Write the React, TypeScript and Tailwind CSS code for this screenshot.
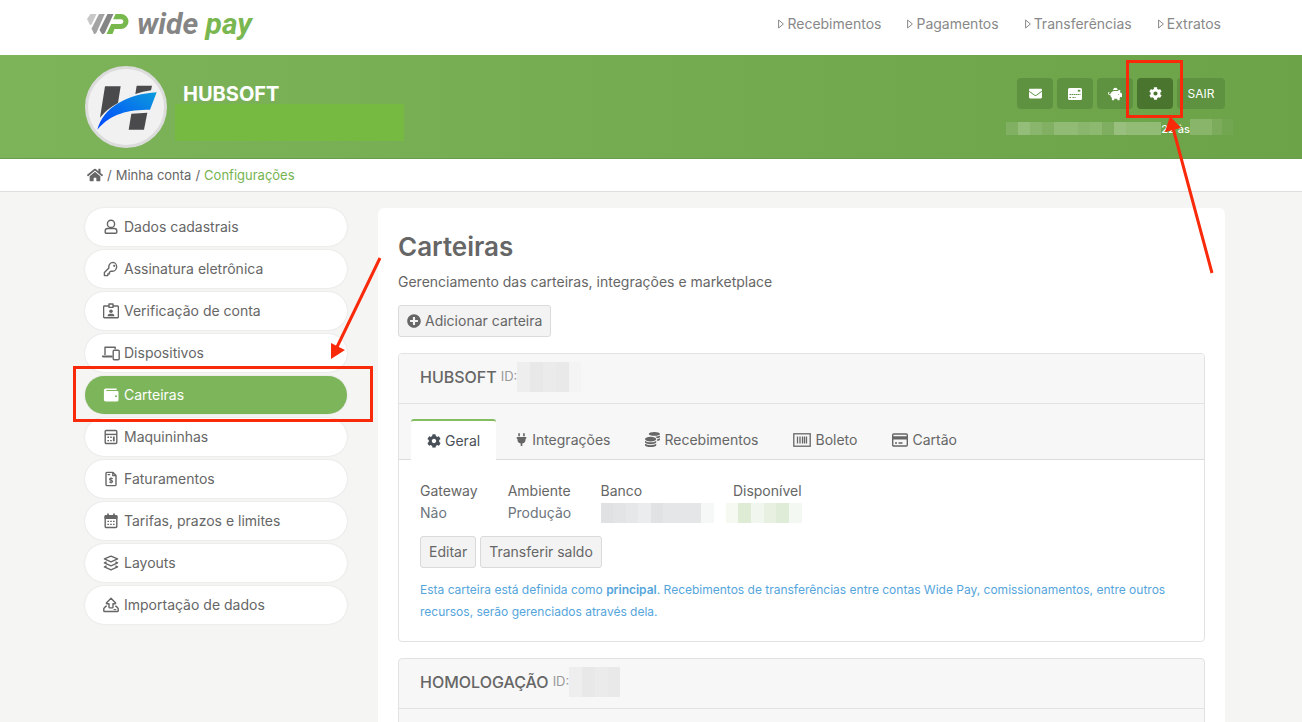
import React from "react";
import { FaCog, FaCoins, FaEnvelope, FaHome, FaPiggyBank, FaPlug, FaPlusCircle } from "react-icons/fa";

interface IconProps {
  className?: string;
  children?: React.ReactNode;
}

interface SideItem {
  label: string;
  icon: React.ReactNode;
  active?: boolean;
}

interface BlurProps {
  cells: string[];
  className: string;
}

const Icon: React.FC<IconProps> = ({ className = "w-4 h-4", children }) => (
  <svg viewBox="0 0 16 16" className={`${className} shrink-0`} fill="none" stroke="currentColor" strokeWidth="1.4" strokeLinejoin="round" aria-hidden="true">
    {children}
  </svg>
);

const sideItems: SideItem[] = [
  {
    label: "Dados cadastrais",
    icon: (
      <Icon>
        <circle cx="8" cy="4.9" r="3.6" />
        <path d="M4.6 9.5h6.8a2.4 2.4 0 0 1 2.4 2.4v1.3a1 1 0 0 1-1 1H3.2a1 1 0 0 1-1-1v-1.3a2.4 2.4 0 0 1 2.4-2.4z" />
      </Icon>
    ),
  },
  {
    label: "Assinatura eletrônica",
    icon: (
      <Icon>
        <path d="M10.2 1.4a4.4 4.4 0 0 0-4.3 5.5L1.4 11.4v3.2h3.4v-1.7h1.6v-1.6l1.7-1.2a4.4 4.4 0 1 0 2.1-8.7z" />
        <circle cx="11.2" cy="4.8" r="1.1" fill="currentColor" stroke="none" />
      </Icon>
    ),
  },
  {
    label: "Verificação de conta",
    icon: (
      <Icon>
        <path d="M6 3H1.4a.8.8 0 0 0-.8.8v10.1a.8.8 0 0 0 .8.8h13.2a.8.8 0 0 0 .8-.8V3.8a.8.8 0 0 0-.8-.8H10" />
        <path d="M6 1h4v3.4H6z" />
        <circle cx="8" cy="8.2" r="1.8" fill="currentColor" stroke="none" />
        <path d="M4.6 13.2c0-1.6.8-2.5 2-2.5h2.8c1.2 0 2 .9 2 2.5z" fill="currentColor" stroke="none" />
      </Icon>
    ),
  },
  {
    label: "Dispositivos",
    icon: (
      <Icon className="w-[18px] h-4">
        <path d="M2 10V2.2h10.2v2" />
        <path d="M-.4 11.4h9.2v.3H.8z" strokeWidth="1.8" />
        <rect x="10.2" y="5.2" width="6" height="9.6" rx="1" />
      </Icon>
    ),
  },
  {
    label: "Carteiras",
    active: true,
    icon: (
      <Icon>
        <path
          d="M2.6 1.6h11v1.5H3.3v.9h10.9a1.3 1.3 0 0 1 1.3 1.3v7.8a1.3 1.3 0 0 1-1.3 1.3H2.6a1.7 1.7 0 0 1-1.7-1.7V3.3a1.7 1.7 0 0 1 1.7-1.7zM13 8.3a1 1 0 1 0 0 2 1 1 0 0 0 0-2z"
          fill="currentColor"
          fillRule="evenodd"
          stroke="none"
        />
      </Icon>
    ),
  },
  {
    label: "Maquininhas",
    icon: (
      <Icon>
        <rect x="2.2" y="1.5" width="11.6" height="13" rx="1" />
        <path d="M2.2 5.4h11.6" />
        <path d="M4.4 8.2h1.6M7.2 8.2h1.6M4.4 11.6h1.6M7.2 11.6h1.6" />
        <path d="M10.8 7.5v4.8" strokeWidth="1.8" />
      </Icon>
    ),
  },
  {
    label: "Faturamentos",
    icon: (
      <Icon>
        <path d="M3 2.2a.8.8 0 0 1 .8-.8H10l3 3v9.4a.8.8 0 0 1-.8.8H3.8a.8.8 0 0 1-.8-.8z" />
        <path d="M9.8 1.4v3.2H13M4.6 3.6h2.6" />
        <path d="M9.8 7.7c-.8-.6-3.3-.7-3.3.6 0 1.4 3.2.7 3.2 2.2 0 1.3-2.6 1.2-3.4.4M8 6.2v6.4" strokeWidth="1.1" />
      </Icon>
    ),
  },
  {
    label: "Tarifas, prazos e limites",
    icon: (
      <Icon>
        <rect x="2.2" y="2.8" width="11.6" height="11.7" rx="1" />
        <path d="M2.2 3h11.6v2.2H2.2z" fill="currentColor" />
        <path d="M5 .6v3M11 .6v3" strokeWidth="1.7" />
        <path d="M4.4 8.4h1.6M7.2 8.4h1.6M10 8.4h1.6M4.4 11.4h1.6M7.2 11.4h1.6M10 11.4h1.6" />
      </Icon>
    ),
  },
  {
    label: "Layouts",
    icon: (
      <Icon>
        <path d="M8 1.2l6.6 2.7L8 6.8 1.4 3.9z" />
        <path d="M3.6 6.8L1.4 7.9 8 10.8l6.6-2.9-2.2-1.1" />
        <path d="M3.6 10.8l-2.2 1.1L8 14.8l6.6-2.9-2.2-1.1" />
      </Icon>
    ),
  },
  {
    label: "Importação de dados",
    icon: (
      <Icon>
        <path d="M8 1.2L3.6 5.7c-.4.5-.2 1 .4 1h2v3.6c0 .4.2.6.6.6h2.8c.4 0 .6-.2.6-.6V6.7h2c.6 0 .8-.5.4-1z" />
        <path d="M3.8 9.2h-1l-2 2.3v2.2c0 .5.3.8.8.8h12.8c.5 0 .8-.3.8-.8v-2.2l-2-2.3h-1" />
        <path d="M10.6 12.6h2.6" strokeWidth="1.1" />
      </Icon>
    ),
  },
];

const tabs = [
  { label: "Geral", icon: <FaCog size={14} />, active: true },
  { label: "Integrações", icon: <FaPlug size={13} /> },
  { label: "Recebimentos", icon: <FaCoins size={15} /> },
  {
    label: "Boleto",
    icon: (
      <svg viewBox="0 0 18 14" className="w-[18px] h-[14px]" fill="none" stroke="currentColor" aria-hidden="true">
        <rect x=".8" y=".8" width="16.4" height="12.4" strokeWidth="1.3" />
        <path d="M4.5 3.5v7M7 3.5v7M9.5 3.5v7M11.5 3.5v7M13.5 3.5v7" strokeWidth="1.3" />
      </svg>
    ),
  },
  {
    label: "Cartão",
    icon: (
      <svg viewBox="0 0 16 14" className="w-4 h-[14px]" fill="none" stroke="currentColor" aria-hidden="true">
        <rect x=".7" y="1" width="14.6" height="12" rx="1" strokeWidth="1.4" />
        <path d="M1 4.8h14" strokeWidth="3.2" />
        <path d="M3 10h2M6.500 10h4" strokeWidth="1.4" />
      </svg>
    ),
  },
];

const menu = ["Recebimentos", "Pagamentos", "Transferências", "Extratos"];

const Blur: React.FC<BlurProps> = ({ cells, className }) => (
  <div className={`flex shrink-0 ${className}`}>
    {cells.map((c, i) => (
      <span key={i} className="flex-1" style={{ backgroundColor: c }} />
    ))}
  </div>
);

const BrandLogo = () => (
  <a href="#" className="flex items-center gap-2 pl-[2px]" aria-label="wide pay">
    <svg viewBox="0 0 42 20" className="w-[42px] h-5" aria-hidden="true">
      <path d="M3.500 0h6L4.600 10.500 3 11 0 5z" fill="#c8c8c8" />
      <path d="M12 0h5.800L9.500 18.500 8 20H7L4.600 14.500z" fill="#a3a3a3" />
      <path d="M20.500 0h6L18 18.500 16.500 20h-1.500L12.500 16z" fill="#858585" />
      <path d="M28.500 0H34a7.500 7.500 0 0 1 0 15h-6.500L25.500 20H19.500l4.800-10H34a2.300 2.300 0 0 0 0-4.800h-7.800z" fill="#78b94d" />
    </svg>
    <span className="font-['Roboto',sans-serif] text-[30px] leading-8 font-bold italic text-[#858585]">
      wide <span className="text-[#7ab751]">pay</span>
    </span>
  </a>
);

const Avatar = () => (
  <div className="w-[82px] h-[82px] rounded-full bg-[#f1f1f1] border-3 border-[#dcdcdc] shrink-0">
    <svg viewBox="9 9 228 228" className="w-full h-full" aria-hidden="true">
      <defs>
        <linearGradient id="swoosh" x1="0" y1="1" x2="1" y2="0">
          <stop offset="0" stopColor="#0046ff" />
          <stop offset="1" stopColor="#0d9bdc" />
        </linearGradient>
      </defs>
      <path d="M60 61h47l-8 50q-34 18-54 44z" fill="#4a4a4c" />
      <path d="M155 59h46l-3 14q-24 3-47 11z" fill="#4a4a4c" />
      <path d="M139 143l48-3-10 51h-46z" fill="#4a4a4c" />
      <path d="M37 191C56 122 130 84 215 79l-20 52C130 131 78 142 37 191z" fill="url(#swoosh)" />
    </svg>
  </div>
);

const userButton = "w-9 h-[31px] rounded bg-[#5e9241] flex items-center justify-center";
const grayButton = "h-8 px-2 rounded-[3px] border border-[#dadada] bg-[#f3f3f3] flex items-center gap-1";

const CardHead: React.FC<{ name: string; cells: string[] }> = ({ name, cells }) => (
  <div className="flex items-center h-[50px] px-[21px] pb-1 border-b border-[#e2e2e2]">
    <h2 className="text-base font-medium">{name}</h2>
    <span className="ml-1 text-[13px] text-[#999]">ID:</span>
    <Blur cells={cells} className="w-16 h-[30px]" />
  </div>
);

export default function App() {
  return (
    <div className="relative h-screen bg-[#f5f5f4] font-['Inter',sans-serif] text-sm text-[#666] overflow-hidden">
      <header className="bg-white pl-2">
        <div className="max-w-[1140px] mx-auto h-[55px] pb-2 flex items-center justify-between">
          <BrandLogo />
          <nav className="flex gap-[26px] pr-1 text-[#888]">
            {menu.map((m) => (
              <a href="#" key={m} className="flex items-center gap-[3px]">
                <svg viewBox="0 0 6 10" className="w-[6px] h-[10px]" fill="none" stroke="currentColor" aria-hidden="true">
                  <path d="M.6 1v8L5.4 5z" />
                </svg>
                {m}
              </a>
            ))}
          </nav>
        </div>
      </header>

      <section className="bg-linear-to-r from-[#7db45a] to-[#6ca349] border-b border-[#6a9d4b] pl-2">
        <div className="max-w-[1140px] mx-auto h-[103px] flex items-start justify-between">
          <div className="flex pt-[11px] gap-2">
            <Avatar />
            <div className="pt-4">
              <h2 className="pl-2 h-[22px] leading-6 text-xl font-bold text-white">HUBSOFT</h2>
              <div className="w-[229px] h-[37px] bg-[#76ba42]" />
            </div>
          </div>
          <div className="pt-[23px] text-white">
            <div className="flex justify-end gap-1">
              <button className={userButton} aria-label="Mensagens"><FaEnvelope size={13} /></button>
              <button className={userButton} aria-label="Cartão">
                <svg viewBox="0 0 14 12" className="w-[14px] h-3" aria-hidden="true">
                  <rect width="14" height="12" rx="1.5" fill="currentColor" />
                  <path d="M1.500 6.500h11M1.500 9.500h1.500M4.500 9.500h3" stroke="#5e9241" strokeWidth="1.2" strokeDasharray="1.5 .5" />
                  <rect x="9.8" y="1.8" width="2.5" height="1.8" fill="#5e9241" />
                </svg>
              </button>
              <button className={userButton} aria-label="Cofrinho"><FaPiggyBank size={14} /></button>
              <button className="w-9 h-[31px] rounded bg-[#4a752e] flex items-center justify-center" aria-label="Configurações"><FaCog size={13} /></button>
              <button className="w-12 h-[31px] rounded bg-[#5e9241] text-xs">SAIR</button>
            </div>
            <div className="flex items-end h-4 mt-[10px] -mr-2 text-[11px] leading-3 font-medium">
              <Blur
                cells={["#82b062", "#94bd79", "#89b66c", "#82b062", "#91bb75", "#91bb75", "#89b66c", "#8cb870", "#80ae60", "#98bf7d", "#92bb76", "#92bb76", "#92bb76"]}
                className="w-[155px] h-[13px]"
              />
              22 às
              <Blur cells={["#89b56b", "#89b56b", "#7cac5b", "#72a650"]} className="w-[43px] h-4" />
            </div>
          </div>
        </div>
      </section>

      <div className="bg-white border-b border-[#dedede] pl-2">
        <nav className="max-w-[1140px] mx-auto h-8 px-[2px] flex items-center gap-1 text-[13px]">
          <a href="#" aria-label="Início"><FaHome size={16} /></a>/<a href="#">Minha conta</a>/
          <a href="#" className="text-[#76b34f]">Configurações</a>
        </nav>
      </div>

      <div className="pl-2">
        <main className="max-w-[1140px] mx-auto pt-4 flex items-start gap-[31px]">
          <nav className="w-[262px] shrink-0 flex flex-col gap-1">
            {sideItems.map((item) => (
              <a
                href="#"
                key={item.label}
                className={`h-[38px] pl-4 rounded-full flex items-center gap-1 shadow-[0_0_2px_rgba(0,0,0,0.12)] ${
                  item.active ? "bg-[#7cb55a] text-white" : "bg-white"
                }`}
              >
                <span className="w-[19px] flex justify-center">{item.icon}</span>
                {item.label}
              </a>
            ))}
          </nav>

          <section className="flex-1 bg-white rounded-md px-5 pt-[21px] pb-5">
            <h1 className="text-[26px] leading-9 font-semibold">Carteiras</h1>
            <p className="mt-[7px] leading-5">Gerenciamento das carteiras, integrações e marketplace</p>
            <button className={`${grayButton} mt-[13px]`}>
              <FaPlusCircle size={14} /> Adicionar carteira
            </button>

            <article className="mt-4 rounded border border-[#e2e2e2] overflow-hidden">
              <div className="bg-[#f7f7f7]">
                <CardHead name="HUBSOFT" cells={["#eee", "#e8e8e8", "#ebebeb", "#e9e9e9", "#f4f4f4"]} />
                <div className="flex items-end gap-[3px] h-14 px-3 border-b border-[#dcdcdc]">
                  {tabs.map((t) => (
                    <button
                      key={t.label}
                      className={`h-[41px] px-4 flex items-center gap-1 border-t-2 ${
                        t.active ? "-mb-px rounded-t-[3px] border-[#83bd5f] bg-white text-[#495057]" : "border-transparent"
                      }`}
                    >
                      {t.icon}
                      {t.label}
                    </button>
                  ))}
                </div>
              </div>

              <div className="px-[21px] pt-5 pb-[18px]">
                <table className="text-left leading-[22px]">
                  <thead>
                    <tr>
                      <th className="font-normal pr-[30px]">Gateway</th>
                      <th className="font-normal pr-[30px]">Ambiente</th>
                      <th className="font-normal pr-3">Banco</th>
                      <th className="font-normal text-right">Disponível</th>
                    </tr>
                  </thead>
                  <tbody className="text-[#6c757d]">
                    <tr>
                      <td>Não</td>
                      <td>Produção</td>
                      <td className="pr-3">
                        <Blur cells={["#e0e1e3", "#e3e4e6", "#e6e7e8", "#ebeced", "#e1e2e4", "#e5e6e7", "#e5e6e7", "#e5e6e7", "#f6f7f7"]} className="w-[113px] h-5" />
                      </td>
                      <td>
                        <Blur cells={["#f5f9f1", "#deebd5", "#f1f6ef", "#e8f1e1", "#dfecd7", "#f3f8f3"]} className="w-[76px] h-5" />
                      </td>
                    </tr>
                  </tbody>
                </table>
                <div className="flex gap-1 mt-3">
                  <button className={grayButton}>Editar</button>
                  <button className={grayButton}>Transferir saldo</button>
                </div>
                <p className="mt-[11px] text-xs leading-[22px] text-[#55a5dc]">
                  Esta carteira está definida como <b className="font-semibold">principal</b>. Recebimentos de transferências entre contas Wide Pay, comissionamentos, entre outros
                  recursos, serão gerenciados através dela.
                </p>
              </div>
            </article>

            <article className="mt-4 rounded border border-[#e2e2e2] bg-[#f7f7f7]">
              <CardHead name="HOMOLOGAÇÃO" cells={["#eee", "#e8e8e8", "#ebebeb", "#e9e9e9", "#f7f7f7"]} />
              <div className="h-14" />
            </article>
          </section>
        </main>
      </div>

      <div className="absolute left-[73px] top-[366px] w-[300px] h-14 border-3 border-[#f92a0a]" />
      <div className="absolute left-[1126px] top-[60px] w-[57px] h-[58px] border-3 border-[#f92a0a]" />
      <svg viewBox="0 0 1302 722" className="absolute left-0 top-0 w-[1302px] h-[722px] pointer-events-none" stroke="#f92a0a" fill="#f92a0a" aria-hidden="true">
        <path d="M380 258L337 347M1212 273L1173 128" strokeWidth="3" fill="none" />
        <path d="M331 359V343l14 7zM1170 116l-5 16 16-4z" stroke="none" />
      </svg>
    </div>
  );
}
